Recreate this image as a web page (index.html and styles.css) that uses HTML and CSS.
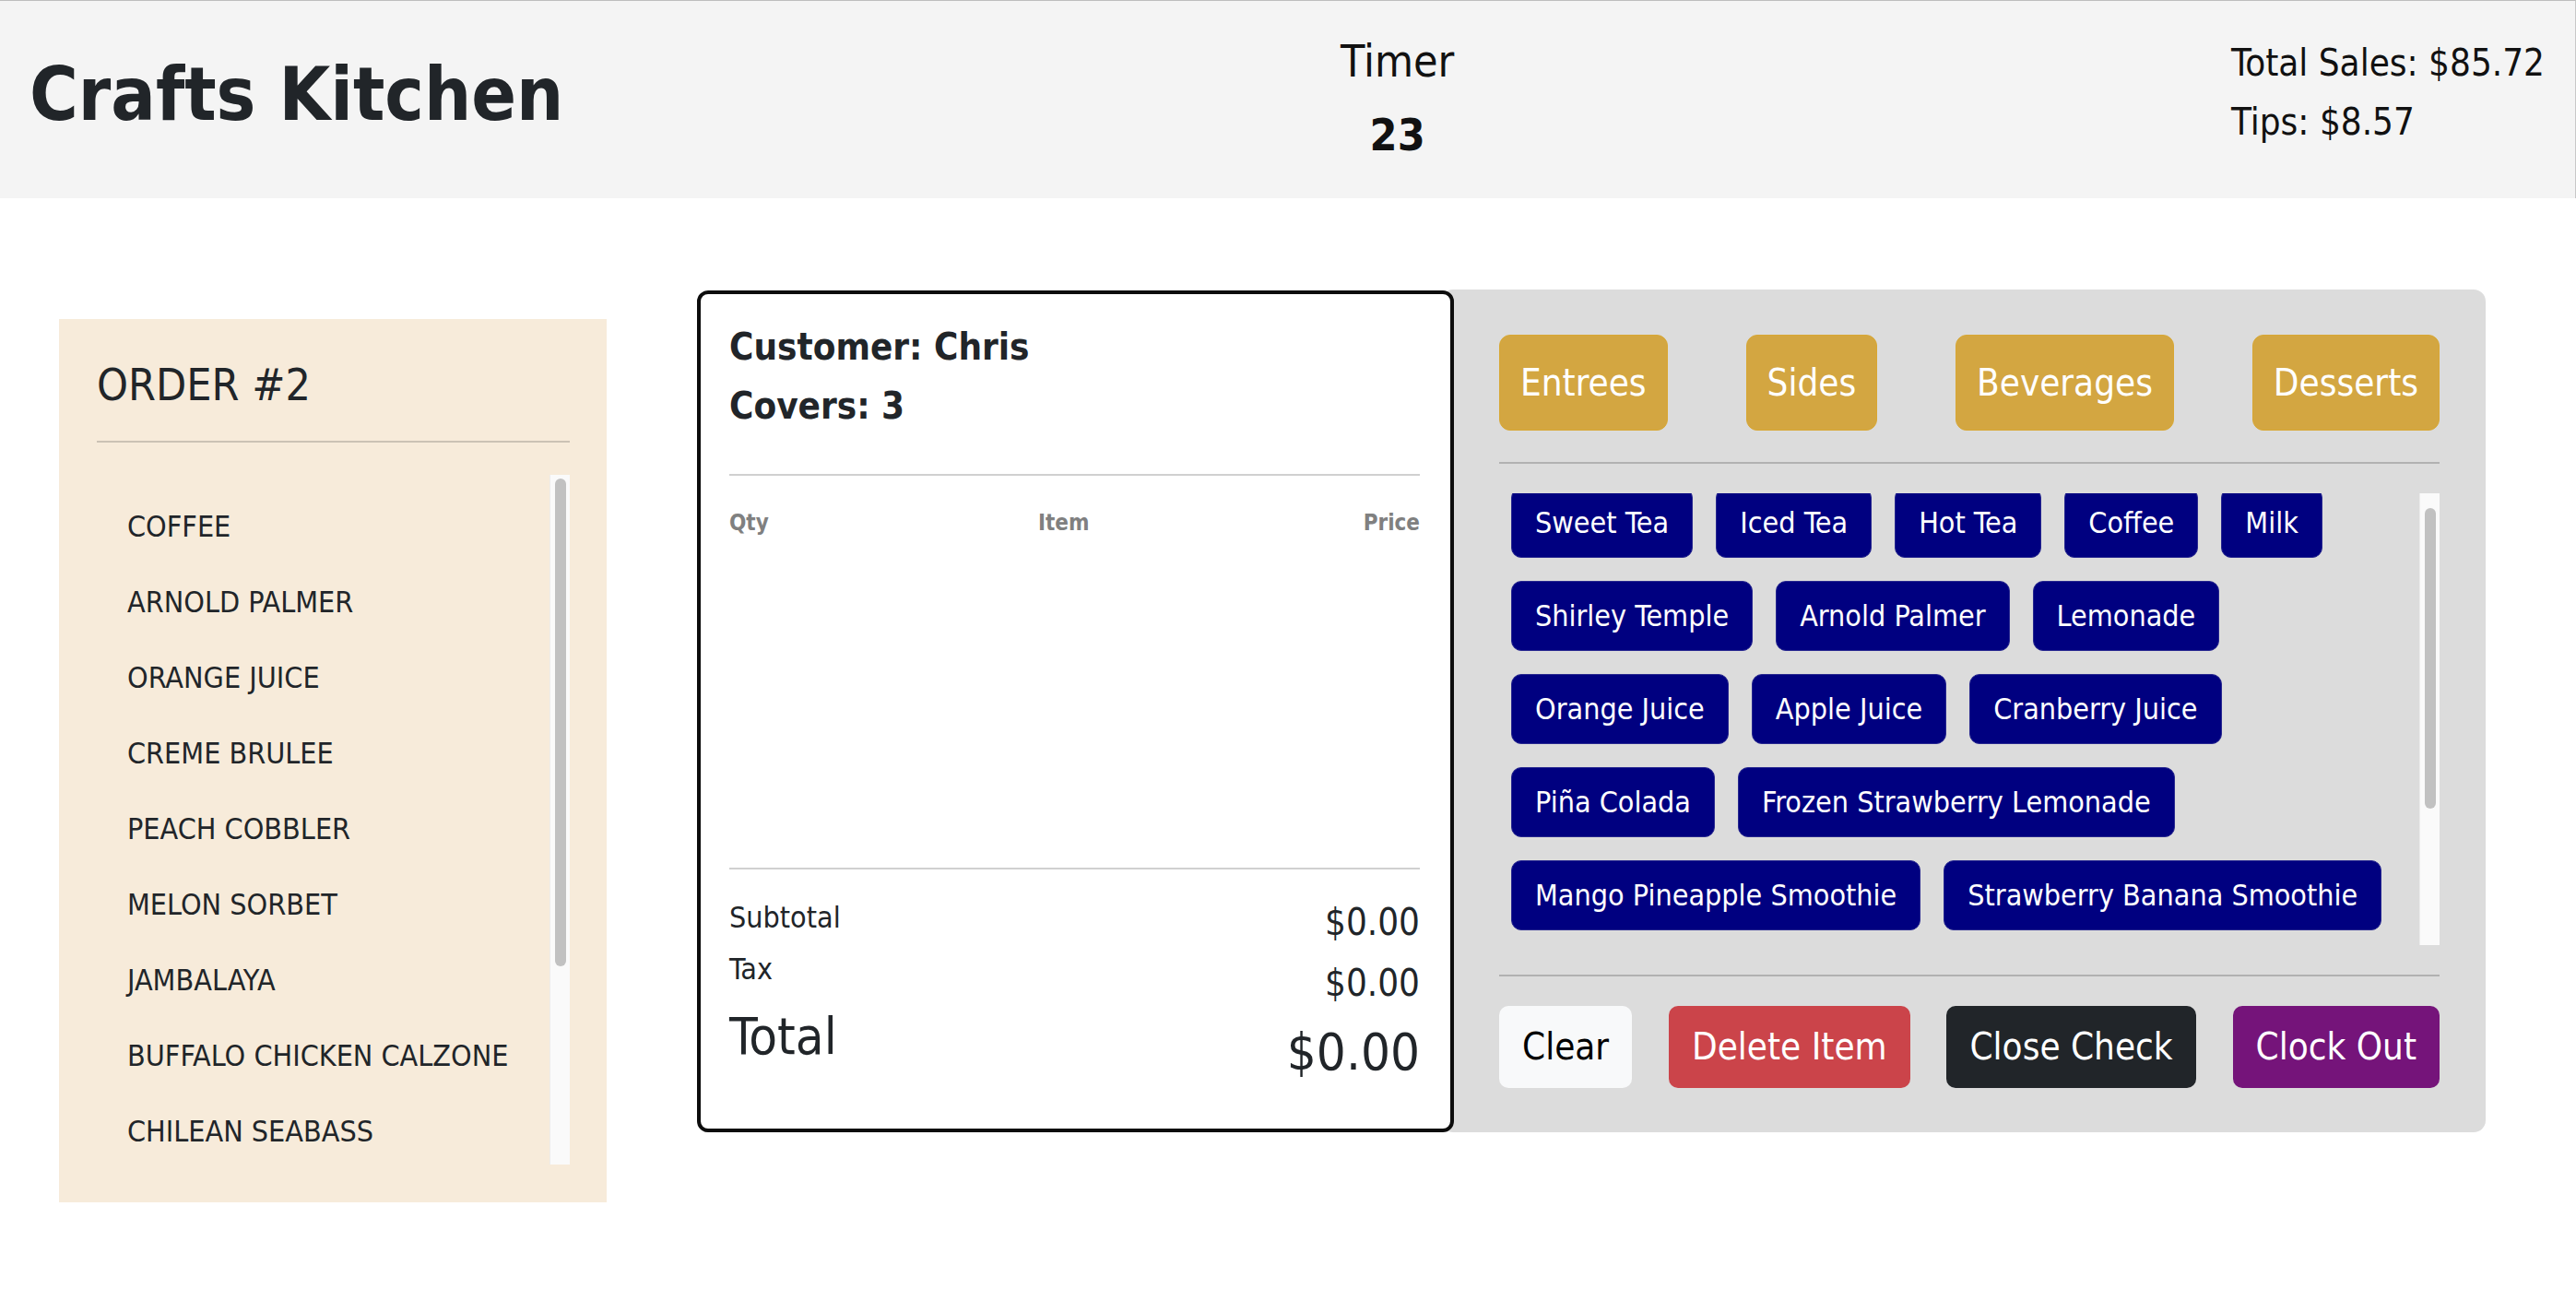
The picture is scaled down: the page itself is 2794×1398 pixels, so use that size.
FILE: index.html
```html
<!DOCTYPE html>
<html lang="en">
<head>
<meta charset="utf-8">
<title>Crafts Kitchen</title>
<link rel="stylesheet" href="styles.css">
</head>
<body>
<header class="topbar">
  <h1 class="brand">Crafts Kitchen</h1>
  <div class="timer">
    <div class="timer-label">Timer</div>
    <div class="timer-value">23</div>
  </div>
  <div class="sales">
    <div>Total Sales: $85.72</div>
    <div>Tips: $8.57</div>
  </div>
</header>

<main class="workspace">
  <section class="order-panel">
    <h2 class="order-title">ORDER #2</h2>
    <hr class="order-rule">
    <div class="order-scroll">
      <ul class="order-list">
        <li>COFFEE</li>
        <li>ARNOLD PALMER</li>
        <li>ORANGE JUICE</li>
        <li>CREME BRULEE</li>
        <li>PEACH COBBLER</li>
        <li>MELON SORBET</li>
        <li>JAMBALAYA</li>
        <li>BUFFALO CHICKEN CALZONE</li>
        <li>CHILEAN SEABASS</li>
      </ul>
      <div class="scrollbar order-bar"><div class="scrollbar-thumb"></div></div>
    </div>
  </section>

  <section class="check">
    <div class="check-customer">Customer: Chris</div>
    <div class="check-covers">Covers: 3</div>
    <hr class="check-rule top">
    <div class="check-head">
      <span>Qty</span>
      <span>Item</span>
      <span class="price-col">Price</span>
    </div>
    <div class="check-lines"></div>
    <hr class="check-rule">
    <div class="check-totals">
      <div class="labels">
        <div class="sub">Subtotal</div>
        <div class="sub">Tax</div>
        <div class="grand">Total</div>
      </div>
      <div class="values">
        <div class="sub">$0.00</div>
        <div class="sub">$0.00</div>
        <div class="grand">$0.00</div>
      </div>
    </div>
  </section>

  <section class="menu">
    <div class="categories">
      <button class="cat-btn">Entrees</button>
      <button class="cat-btn">Sides</button>
      <button class="cat-btn">Beverages</button>
      <button class="cat-btn">Desserts</button>
    </div>
    <hr class="menu-rule">
    <div class="menu-items">
      <div class="menu-viewport">
        <div class="menu-grid">
          <button class="item-btn">Sweet Tea</button>
          <button class="item-btn">Iced Tea</button>
          <button class="item-btn">Hot Tea</button>
          <button class="item-btn">Coffee</button>
          <button class="item-btn">Milk</button>
          <button class="item-btn">Shirley Temple</button>
          <button class="item-btn">Arnold Palmer</button>
          <button class="item-btn">Lemonade</button>
          <button class="item-btn">Orange Juice</button>
          <button class="item-btn">Apple Juice</button>
          <button class="item-btn">Cranberry Juice</button>
          <button class="item-btn">Piña Colada</button>
          <button class="item-btn">Frozen Strawberry Lemonade</button>
          <button class="item-btn">Mango Pineapple Smoothie</button>
          <button class="item-btn">Strawberry Banana Smoothie</button>
        </div>
      </div>
      <div class="scrollbar menu-bar"><div class="scrollbar-thumb"></div></div>
    </div>
    <hr class="menu-rule">
    <div class="actions">
      <button class="act-btn act-clear">Clear</button>
      <button class="act-btn act-delete">Delete Item</button>
      <button class="act-btn act-close">Close Check</button>
      <button class="act-btn act-clock">Clock Out</button>
    </div>
  </section>
</main>
</body>
</html>
```

FILE: styles.css
```css
html, body {
  margin: 0;
  padding: 0;
}

body {
  font-family: "DejaVu Sans Condensed", "DejaVu Sans", sans-serif;
  font-stretch: condensed;
  color: #212529;
  background: #ffffff;
}

button {
  font-family: inherit;
  font-stretch: inherit;
  cursor: pointer;
}

/* ---------- header ---------- */
.topbar {
  height: 215px;
  box-sizing: border-box;
  background: #f4f4f4;
  border-top: 1px solid #bdbdbd;
  border-right: 1px solid #c8c8c8;
  display: flex;
  justify-content: space-between;
  align-items: flex-start;
  padding: 0 33px 0 32px;
}

.brand {
  margin: 62px 0 0;
  font-size: 80px;
  line-height: 80px;
  font-weight: 700;
  color: #212529;
}

.timer {
  margin-top: 25px;
  text-align: center;
  font-size: 48px;
  line-height: 80px;
  color: #111111;
}

.timer-value {
  font-weight: 700;
}

.sales {
  margin-top: 35px;
  font-size: 40px;
  line-height: 64px;
  color: #111111;
}

/* ---------- workspace ---------- */
.workspace {
  display: flex;
  align-items: flex-start;
  padding-left: 64px;
}

/* scrollbars drawn as flow elements */
.scrollbar {
  flex: none;
  width: 22px;
  box-sizing: border-box;
  background: #fafafa;
  border-left: 1px solid #ececec;
  padding: 0 4px 0 5px;
}

.scrollbar-thumb {
  background: #c1c1c1;
  border-radius: 6px;
}

.order-bar {
  padding-top: 4px;
}

.order-bar .scrollbar-thumb {
  height: 529px;
}

.menu-bar {
  padding-top: 16px;
}

.menu-bar .scrollbar-thumb {
  height: 326px;
}

/* order panel */
.order-panel {
  width: 594px;
  height: 958px;
  box-sizing: border-box;
  margin-top: 131px;
  background: #f7ebda;
  padding: 42px 40px 41px 41px;
  display: flex;
  flex-direction: column;
}

.order-title {
  margin: 0;
  font-size: 48px;
  line-height: 58px;
  font-weight: 400;
  color: #212529;
}

.order-rule {
  margin: 32px 0 0;
  border: 0;
  border-top: 2px solid #cbc2b4;
}

.order-scroll {
  margin-top: 35px;
  height: 748px;
  display: flex;
}

.order-list {
  flex: 1;
  list-style: none;
  margin: 0;
  padding: 37px 0 0 33px;
  overflow: hidden;
}

.order-list li {
  font-size: 32px;
  line-height: 38px;
  margin-bottom: 44px;
  color: #212529;
}

/* check */
.check {
  position: relative;
  z-index: 1;
  width: 821px;
  height: 913px;
  box-sizing: border-box;
  margin: 100px -14px 0 98px;
  border: 4px solid #0d0d0d;
  border-radius: 12px;
  background: #ffffff;
  padding: 33px 33px 51px 31px;
  display: flex;
  flex-direction: column;
}

.check-customer,
.check-covers {
  font-size: 40px;
  line-height: 48px;
  font-weight: 700;
  color: #212529;
}

.check-covers {
  margin-top: 16px;
}

.check-rule {
  width: 100%;
  margin: 0;
  border: 0;
  border-top: 2px solid #d0d0d0;
}

.check-rule.top {
  margin-top: 50px;
}

.check-head {
  margin-top: 36px;
  display: grid;
  grid-template-columns: 335px 1fr auto;
  font-size: 24px;
  line-height: 30px;
  font-weight: 700;
  color: #808080;
}

.check-lines {
  flex: 1;
}

.check-totals {
  margin-top: 24px;
  display: flex;
  justify-content: space-between;
  color: #212529;
}

.labels .sub {
  font-size: 32px;
  line-height: 56px;
}

.labels .grand {
  margin-top: 13px;
  font-size: 56px;
  line-height: 64px;
}

.values {
  text-align: right;
}

.values .sub {
  font-size: 40px;
  line-height: 66px;
}

.values .grand {
  margin-top: 10px;
  font-size: 56px;
  line-height: 64px;
}

/* menu panel */
.menu {
  width: 1133px;
  height: 914px;
  box-sizing: border-box;
  margin-top: 99px;
  background: #dcdcdc;
  border-radius: 13px;
  padding: 49px 50px 48px 63px;
  display: flex;
  flex-direction: column;
}

.categories {
  display: flex;
  justify-content: space-between;
}

.cat-btn {
  font-size: 40px;
  line-height: 60px;
  padding: 21px 22px;
  border: 1px solid #d8a733;
  border-radius: 12px;
  background: #d3a641;
  color: #ffffff;
}

.menu-rule {
  width: 100%;
  margin: 34px 0 0;
  border: 0;
  border-top: 2px solid #b1b1b1;
}

.menu-items + .menu-rule {
  margin-top: 32px;
}

.menu-items {
  margin-top: 32px;
  height: 490px;
  display: flex;
}

.menu-viewport {
  flex: 1;
  overflow: hidden;
}

.menu-grid {
  display: flex;
  flex-wrap: wrap;
  align-content: flex-start;
  gap: 25px;
  margin-top: -6px;
  padding-left: 13px;
}

.item-btn {
  font-size: 32px;
  line-height: 42px;
  padding: 16px 25px;
  border: 1px solid #27278f;
  border-radius: 11px;
  background: #000080;
  color: #ffffff;
}

.actions {
  margin-top: 32px;
  display: flex;
  justify-content: space-between;
}

.act-btn {
  font-size: 40px;
  line-height: 49px;
  padding: 20px 25px;
  border: 0;
  border-radius: 10px;
  color: #ffffff;
}

.act-clear {
  background: #f8f9fa;
  color: #000000;
}

.act-delete {
  background: #cb444a;
}

.act-close {
  background: #212529;
}

.act-clock {
  background: #75147a;
}
```
